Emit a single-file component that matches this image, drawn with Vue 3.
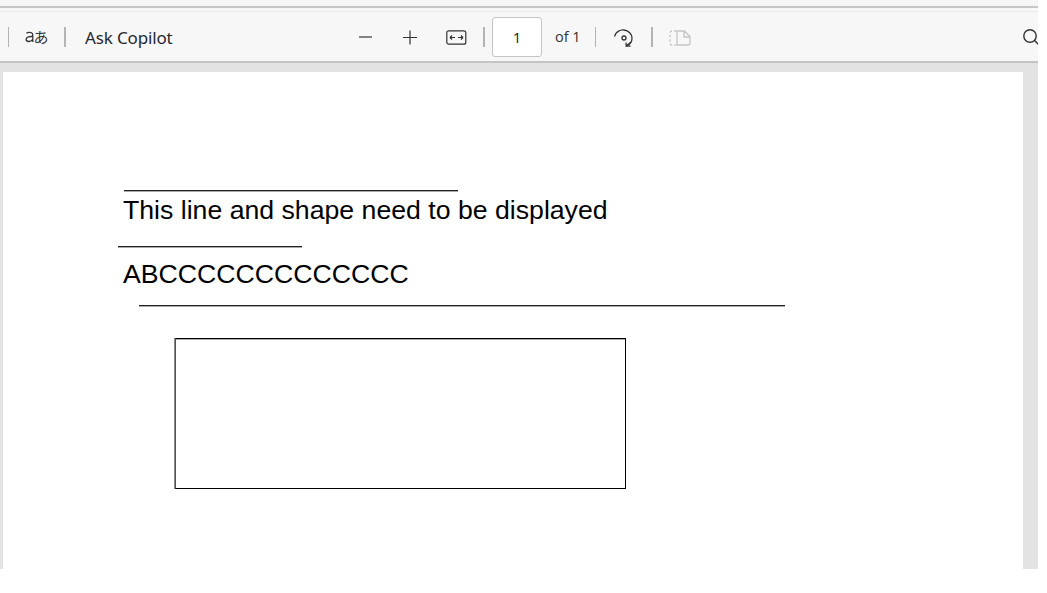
<script setup>
const lines = [
  { x: 121, y: 118, w: 334 },
  { x: 115, y: 174, w: 184 },
  { x: 136, y: 233, w: 646 },
]
</script>

<template>
  <div class="shot">
    <div class="top-strip"></div>
    <div class="tab-gap"></div>
    <header class="toolbar">
      <span class="sep thin first"></span>
      <svg class="icon read" width="25" height="20" viewBox="0 0 25 20" fill="none" stroke="#333" stroke-width="1.3">
        <path d="M2.500 6.200c1.200-1.200 5.200-1.400 6 .5.300.8.300 2.200.3 8.300M8.800 9.600C5.500 9.200 2.300 10 2.100 12.300 2 15 6.500 15.500 8.800 12.300" />
        <text x="9.500" y="15.500" class="kana">あ</text>
      </svg>
      <span class="sep wide s1"></span>
      <span class="copilot">Ask Copilot</span>
      <svg class="icon minus" width="14" height="14" viewBox="0 0 14 14" stroke="#444" stroke-width="1.3"><path d="M0 7h13" /></svg>
      <svg class="icon plus" width="15" height="15" viewBox="0 0 15 15" stroke="#333" stroke-width="1.2" fill="none"><path d="M0 7.500h14M7 .5v14" /></svg>
      <svg class="icon fit" width="21" height="15" viewBox="0 0 21 15" fill="none" stroke="#333" stroke-width="1.2">
        <rect x=".8" y=".8" width="19" height="13.400" rx="2" />
        <path d="M4 7.500h5M4 7.500l2-2M4 7.500l2 2M12 7.500h5M17 7.500l-2-2M17 7.500l-2 2" />
      </svg>
      <span class="sep wide s2"></span>
      <span class="page-box">1</span>
      <span class="of">of 1</span>
      <span class="sep thin s3"></span>
      <svg class="icon rotate" width="22" height="22" viewBox="0 0 22 22" fill="none" stroke="#333" stroke-width="1.3">
        <path d="M1.500 9.500C2.500 5 7 2.600 11 3c4.600.5 8 4 8 8.200 0 3.600-2.200 6.500-5.600 7.600" />
        <path d="M18 15l-4.800 4-.2-3.400 M13.200 19l4.400.2" />
        <circle cx="11" cy="11" r="2" />
      </svg>
      <span class="sep wide s4"></span>
      <svg class="icon spread" width="22" height="16" viewBox="0 0 22 16" fill="none" stroke="#c6c6c6" stroke-width="1.3">
        <path d="M7.500 1H3a2 2 0 0 0-2 2v10a2 2 0 0 0 2 2h4.500" stroke-dasharray="2.500 2" />
        <path d="M8 15V1h7.500L21 6.500V13a2 2 0 0 1-2 2H8ZM15 1v6h6" />
      </svg>
      <svg class="icon search" width="16" height="17" viewBox="0 0 16 17" fill="none" stroke="#333" stroke-width="1.4">
        <circle cx="7" cy="7" r="6.200" /><path d="M11.500 11.500l4 4" />
      </svg>
    </header>
    <main class="viewer">
      <section class="pdf-page">
        <span v-for="l in lines" :key="l.y" class="rule" :style="{ left: l.x + 'px', top: l.y + 'px', width: l.w + 'px' }"></span>
        <p class="pdf-text first-text">This line and shape need to be displayed</p>
        <p class="pdf-text second-text">ABCCCCCCCCCCCCC</p>
        <div class="shape"></div>
      </section>
    </main>
  </div>
</template>

<style scoped>
.shot { width: 1038px; height: 569px; overflow: hidden; background: #e3e3e3; display: flex; flex-direction: column; font-family: "Open Sans", "Noto Sans", sans-serif; }
.top-strip { height: 6px; background: #f6f6f6; border-bottom: 2px solid #c6c6c6; flex: none; }
.tab-gap { height: 3px; background: #f7f7f7; border-bottom: 1px solid #ececec; flex: none; }
.toolbar { height: 49px; flex: none; position: relative; background: #f7f7f7; border-bottom: 2px solid #c4c4c4; overflow: hidden; }
.toolbar > * { position: absolute; }
.sep { background: #b4b4b4; top: 15px; height: 20px; }
.thin { width: 1px; }
.wide { width: 2px; }
.first { left: 8px; }
.s1 { left: 64px; }
.s2 { left: 483px; }
.s3 { left: 595px; }
.s4 { left: 651px; }
.read { left: 24px; top: 15px; }
.kana { font: 15px "Noto Sans CJK JP", sans-serif; fill: #333; stroke: none; }
.copilot { left: 85px; top: 14px; font-size: 17px; line-height: 23px; color: #26292e; font-family: "Noto Sans", sans-serif; letter-spacing: -0.15px; }
.minus { left: 359px; top: 18px; }
.plus { left: 403px; top: 18px; }
.fit { left: 446px; top: 18px; }
.page-box { left: 492px; top: 5px; width: 48px; height: 38px; background: #fff; border: 1px solid #c4c4c4; border-radius: 3px; text-align: center; font-size: 15px; line-height: 38px; color: #222; }
.of { left: 555px; top: 15px; font-size: 14.500px; line-height: 20px; color: #333; }
.rotate { left: 613px; top: 15px; }
.spread { left: 669px; top: 18px; }
.search { left: 1023px; top: 17px; }
.viewer { flex: 1; padding: 9px 15px 0 3px; min-height: 0; }
.pdf-page { position: relative; width: 1020px; height: 500px; background: #fff; }
.rule { position: absolute; height: 2px; background: linear-gradient(#222 50%, #aaa 50%); }
.pdf-text { position: absolute; margin: 0; left: 120px; font: 26.670px/34px "Liberation Sans", Arial, sans-serif; color: #000; white-space: nowrap; }
.first-text { top: 121px; }
.second-text { top: 185px; }
.shape { position: absolute; left: 172px; top: 266px; width: 449px; height: 149px; border: 1px solid #000; border-left-color: #555; box-shadow: -1px 0 0 #888, inset 0 1px 0 #aaa; }
</style>

<style>
html, body { background: #fff; }
</style>
